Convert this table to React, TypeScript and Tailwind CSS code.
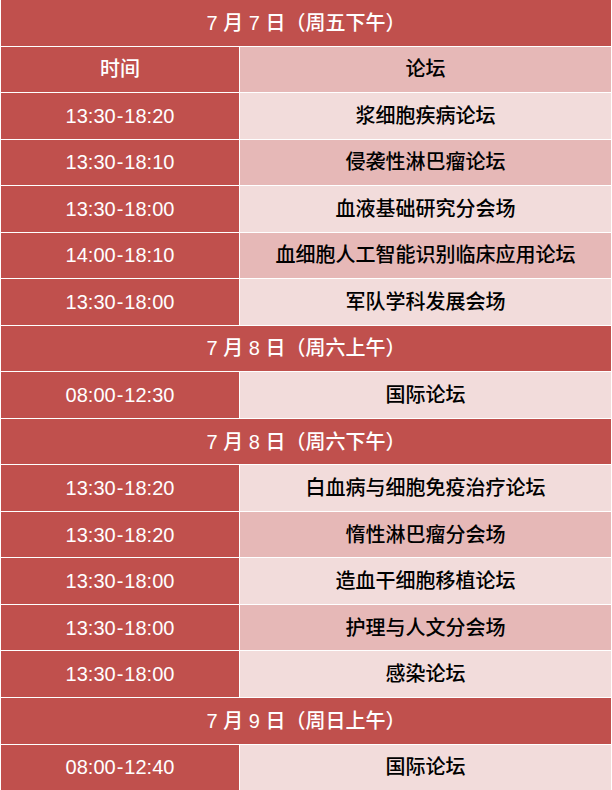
import React from 'react';

type Row =
  | { kind: 'day'; label: string }
  | { kind: 'head' }
  | { kind: 'item'; time: string; name: string; dark?: boolean };

const rows: Row[] = [
  { kind: 'day', label: '7 月 7 日（周五下午）' },
  { kind: 'head' },
  { kind: 'item', time: '13:30-18:20', name: '浆细胞疾病论坛' },
  { kind: 'item', time: '13:30-18:10', name: '侵袭性淋巴瘤论坛', dark: true },
  { kind: 'item', time: '13:30-18:00', name: '血液基础研究分会场' },
  { kind: 'item', time: '14:00-18:10', name: '血细胞人工智能识别临床应用论坛', dark: true },
  { kind: 'item', time: '13:30-18:00', name: '军队学科发展会场' },
  { kind: 'day', label: '7 月 8 日（周六上午）' },
  { kind: 'item', time: '08:00-12:30', name: '国际论坛' },
  { kind: 'day', label: '7 月 8 日（周六下午）' },
  { kind: 'item', time: '13:30-18:20', name: '白血病与细胞免疫治疗论坛' },
  { kind: 'item', time: '13:30-18:20', name: '惰性淋巴瘤分会场', dark: true },
  { kind: 'item', time: '13:30-18:00', name: '造血干细胞移植论坛' },
  { kind: 'item', time: '13:30-18:00', name: '护理与人文分会场', dark: true },
  { kind: 'item', time: '13:30-18:00', name: '感染论坛' },
  { kind: 'day', label: '7 月 9 日（周日上午）' },
  { kind: 'item', time: '08:00-12:40', name: '国际论坛' },
];

const font = { fontFamily: '"Liberation Sans", "Noto Sans CJK SC", sans-serif' };

// split "13:30-18:20" so the dash gets a little air on each side
const TimeText = ({ t }: { t: string }) => {
  const [a, b] = t.split('-');
  return (
    <span>
      {a}
      <span className="px-[1px]">-</span>
      {b}
    </span>
  );
};

export default function App() {
  return (
    <div
      className="w-[612px] h-[790px] bg-white px-px flex flex-col gap-px text-[20px] leading-none font-medium"
      style={font}
    >
      {rows.map((r, i) => {
        if (r.kind === 'day') {
          return (
            <div key={i} className="flex-1 flex items-center justify-center bg-[#c0504d] text-white">
              {r.label}
            </div>
          );
        }
        const dark = r.kind === 'head' || r.dark;
        return (
          <div key={i} className="flex-1 flex gap-px">
            <div className="w-[238px] flex items-center justify-center bg-[#c0504d] text-white">
              {r.kind === 'head' ? '时间' : <TimeText t={r.time} />}
            </div>
            <div
              className={`flex-1 flex items-center justify-center text-black ${
                dark ? 'bg-[#e6b8b7]' : 'bg-[#f2dcdb]'
              }`}
            >
              {r.kind === 'head' ? '论坛' : r.name}
            </div>
          </div>
        );
      })}
    </div>
  );
}
